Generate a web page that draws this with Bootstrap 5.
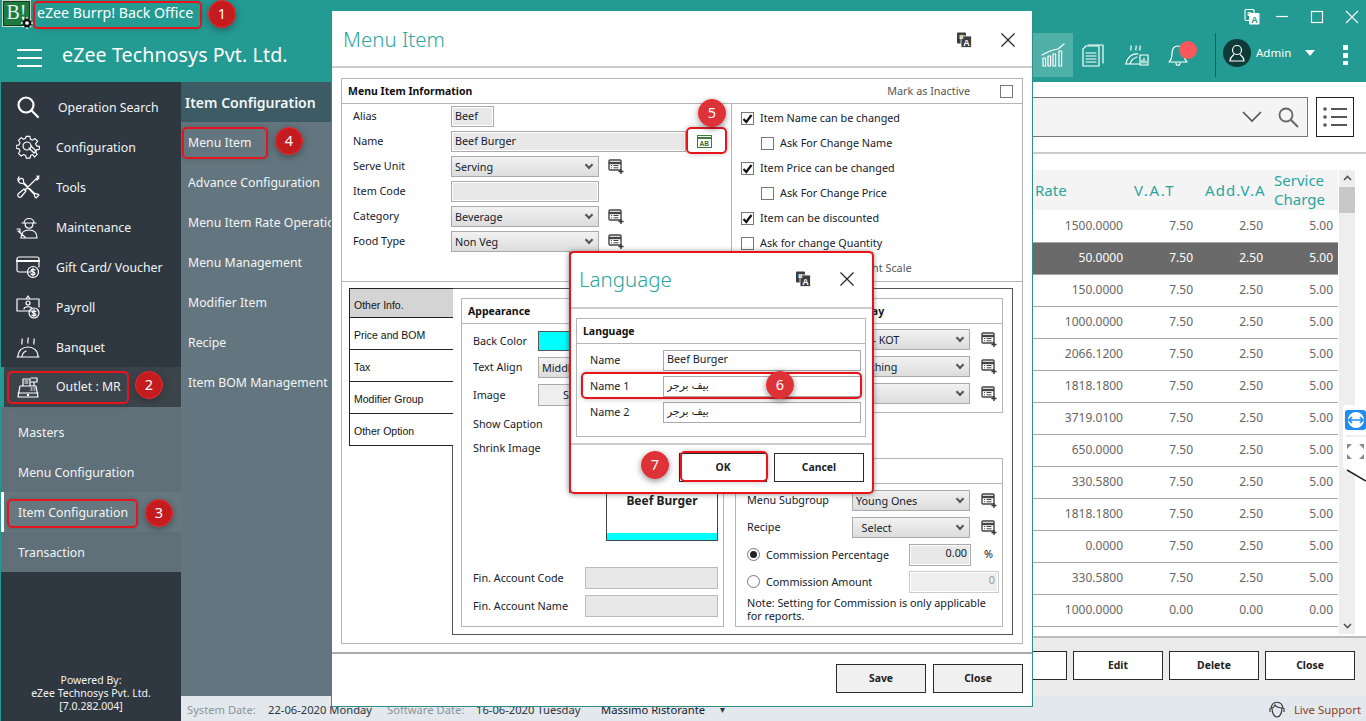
<!DOCTYPE html>
<html lang="en"><head><meta charset="utf-8"><title>eZee Burrp! Back Office</title>
<link href="https://cdn.jsdelivr.net/npm/bootstrap@5.3.0/dist/css/bootstrap.min.css" rel="stylesheet">
<style>
html,body{margin:0;width:1366px;height:721px;overflow:hidden;background:#fff}
body{font-family:"Noto Sans","DejaVu Sans",sans-serif;font-size:10.8px;color:#14202c;position:relative}
svg{display:block;flex:none}
.ic{fill:none;stroke:#fff;stroke-width:1.2;stroke-linecap:round;stroke-linejoin:round}
.shell{height:721px}
.topbar{background:#239a92;height:82px;color:#fff}
.titlerow{height:33px}
.logo{width:29px;height:27px;margin-left:2px;background:#1f7a42;border:1px solid #c8d8c8;box-shadow:inset 0 0 0 1px #0d3f22;color:#e8f3e6;font-family:"Liberation Serif",serif;font-size:20px;line-height:23px;text-align:center;position:relative}
.logogear{position:absolute;right:-3px;bottom:-3px}
.apptitle{font-size:14.2px;margin-left:6px;line-height:26px}
.winctl{margin-left:auto;padding-right:7px;gap:17px}
.trw-pos{margin-right:-6px}
.brandrow{height:49px}
.burger{width:25px;height:18px;margin-left:17px;border-top:2px solid #fff;border-bottom:2px solid #fff;position:relative}
.burger::after{content:"";position:absolute;left:0;right:0;top:6px;height:2px;background:#fff}
.brand{font-size:19.6px;margin-left:20px;letter-spacing:.1px;line-height:1;margin-top:-5px}
.hdr-icons{margin-left:auto;height:44px;align-self:flex-start}
.hi{width:40px;height:44px}
.hi-on{background:#4fb0a9}
.hi-2{margin-right:4px}.hi-3{margin-right:1px}
.bell-wrap{position:relative}
.dot{position:absolute;left:21px;top:8px;width:18px;height:18px;border-radius:50%;background:#f8575c}
.vsep{width:1px;height:44px;background:#155e59;margin-left:17px}
.avatar{width:28px;height:28px;border-radius:50%;background:#0e3b38;margin:-4px 0 0 7px}
.adminname{font-size:11.5px;margin:-4px 0 0 5px;width:49px}
.caretd{width:0;height:0;border-left:5px solid transparent;border-right:5px solid transparent;border-top:6px solid #fff;margin-top:-4px}
.kebab{margin:0 18px 0 28px;width:5px;height:20px;background:linear-gradient(#fff 5px,transparent 5px 8px,#fff 8px 13px,transparent 13px 16px,#fff 16px)}
.bodyrow{height:639px}
.sidebar{width:181px;background:#2f3740;border-left:1px solid #239a92;color:#f2f5f6;font-size:12.3px;flex-shrink:0}
.sb-main{padding-top:5px}
.sb-item{height:40px;padding-left:15px;gap:16px}
.sb-item span{padding-top:2px}
.sb-search{margin-right:2px}
.sb-outlet{height:40px;background:#3b434b;border-left:3px solid #239a92;padding-left:12px;gap:16px}
.sb-sub{background:#5f7079;padding-top:5px}
.sb-subitem{height:40px;padding:2px 0 0 17px}
.sb-active{background:#66777f;border-left:3px solid #fff;padding-left:14px}
.powered{margin-top:auto;text-align:center;font-size:10.5px;line-height:13px;padding-bottom:8px}
.subnav{width:151px;background:#63757e;color:#f2f5f6;font-size:12.3px;height:614px;overflow:hidden;white-space:nowrap;flex-shrink:0}
.subhead{height:40px;background:#3d5b65;font-size:14px;font-weight:600;padding:0 0 0 4px;margin-bottom:1px}
.subitem{height:40px;padding-left:7px}
.statusbar{background:#e3e8ec;height:25px;font-size:11.2px;padding:3px 5px 0 6px;white-space:nowrap;color:#2c3540}
.st-dim{color:#8b949c}
.st-a{width:81px}.st-b{width:119px}.st-c{width:89px}.st-d{width:125px}
.st-e{width:119px;color:#14202c}
.live{margin-left:auto;color:#8c3c1e;font-size:11.4px;gap:8px}
.mainarea{width:1034px}
.toolbar{height:72px;padding:15px 12px 0 0;border-bottom:2px solid #ccc;gap:8px;flex:none}
.finder{flex:1;height:40px;background:#f4f4f4;border:1px solid #777;justify-content:flex-end;gap:15px;padding-right:8px}
.listbtn{width:38px;height:40px;border:1px solid #222;background:#fff}
.tablezone{padding-top:16px;height:484px;border-bottom:2px solid #bbb;flex:none;overflow:hidden}
.grid-wrap{flex:1;height:464px;overflow:hidden}
.datagrid{width:1006px;table-layout:fixed;border-collapse:collapse;margin:0}
.datagrid th{height:40px;background:#f4f4f4;color:#2aa5a0;font-weight:400;font-size:15px;line-height:19px;padding:0 0 0 2px;border:0;vertical-align:middle}
.datagrid td{height:32px;padding:0 5px 0 0;text-align:right;color:#666;font-size:12px;border:0;border-bottom:1px solid #a8a8a8;vertical-align:middle;background:#fff}
.datagrid tr.sel td{background:#6a6a6a;color:#fff}
.c-name{width:701px}.c-rate{width:95px}.c-num{width:70px}
.datagrid .th-v{padding-left:6px;letter-spacing:1.6px}
.datagrid .th-a{padding-left:7px;white-space:nowrap;letter-spacing:1.1px}
.datagrid .th-s{padding-left:6px}
.vbar{width:16px;height:464px;background:#eee;margin:0 11px 0 1px;position:relative;flex:none}
.vthumb{height:26px;background:#c8c8c8;margin-top:17px}
.arrow-up,.arrow-dn{position:absolute;left:4px}
.arrow-up{top:5px}.arrow-dn{bottom:5px}
.actionbar{background:#ebebeb;height:58px;padding:13px 11px 0 0;gap:6px;flex:none}
.pbtn{width:90px;height:29px;border:1px solid #2a2a2a;border-radius:0;background:#fff;color:#222;font-weight:700;font-size:10.4px;padding:0;line-height:1;--bs-btn-hover-bg:#fff}
.pbtn-g{background:#f0f0f0}
.pbtn-ok{width:88px}
.win{position:absolute;background:#fff;display:flex;flex-direction:column}
.win-main{left:331px;top:11px;width:702px;height:696px;border:1px solid #2f8f88;border-top:0}
.win-head{height:57px;padding:2px 16px 0 11px;border-bottom:2px solid #ccc;flex:none}
.win-title{font-size:20.5px;color:#2aa5a0;font-weight:300;line-height:1;margin:0}
.win-tools{margin-left:auto;gap:28px}
.win-x{width:16px;height:16px}
.infobox{margin:10px 9px 0 9px;border:1px solid #b5b5b5;flex:1;min-height:0}
.infohead{height:25px;padding:0 9px 0 6px;border-bottom:1px solid #b5b5b5;flex:none}
.infohead b{font-weight:700;font-size:10.5px;color:#111;padding-top:2px}
.chk{width:13px;height:13px;border:1px solid #777;background:#fff;flex:none;display:flex;align-items:center;justify-content:center}
.chk-far{margin-left:30px}
.topsplit{height:178px;border-bottom:1px solid #b5b5b5;flex:none}
.lp{width:390px;border-right:1px solid #b5b5b5;flex:none}
.frow{height:25px;padding-left:11px}
.flabel{width:98px;flex:none}
.tbox{background:#e8e8e8;border:1px solid #aaa;box-shadow:inset 0 0 0 1px #fff;height:21px;padding:0 3px 2px;line-height:16px;font-size:10.8px;color:#14202c;border-radius:0;min-height:0}
.tbox:focus{background:#e8e8e8;border-color:#aaa;box-shadow:inset 0 0 0 1px #fff}
.w-alias{width:43px}.w-name{width:235px}.w-sel{width:148px}
.ab-ic{margin-left:11px}
.dd{height:21px;min-height:0;border:1px solid #aaa;border-radius:0;padding:0 18px 0 3px;font-size:10.8px;line-height:19px;color:#14202c;background:linear-gradient(#f2f2f2,#dcdcdc);background-color:#e8e8e8;position:relative;width:148px;flex:none;white-space:nowrap;overflow:hidden;display:flex;align-items:center}
.dd::after{content:"";position:absolute;right:6px;top:5px;width:6px;height:6px;border:solid #555;border-width:0 2px 2px 0;transform:rotate(45deg)}
.addic{margin-left:9px}
.addic-r{margin-left:11px}
.rp{padding:2px 0 0 9px;flex:1}
.crow{height:25px;gap:6px}
.crow-sub{padding-left:20px}
.dim{color:#555}
.lowsplit{flex:1;padding:6px 9px 8px 7px;min-height:0}
.tabsc{width:104px;flex:none;z-index:1;margin-right:-1px}
.vtab{height:32px;border:1px solid #222;border-top:0;padding:5px 0 0 4px;background:#fff;font-family:"Liberation Sans",sans-serif;font-size:10.5px;color:#111;display:flex;align-items:center;border-right:0}
.vtab:first-child{height:30px;border-top:1px solid #222;background:#d4d4d4}
.tabpane{flex:1;border:1px solid #555;padding:9px 9px 7px 8px;gap:11px;min-width:0}
.panel{border:1px solid #b5b5b5}
.panel-l{width:263px;flex:none;height:100%}
.panelhead{height:25px;padding:2px 0 0 6px;border-bottom:1px solid #b5b5b5;font-weight:700;font-size:10.5px;color:#111;flex:none}
.ph-disp{padding-left:110px}
.prow{padding-left:11px;display:flex;align-items:center}
.pr-1{margin-top:7px;height:20px}
.pr-2{margin-top:6px;height:21px}
.pr-3{margin-top:6px;height:22px}
.pr-4{margin-top:8px;height:20px}
.pr-5{margin-top:4px;height:20px}
.pr-6{margin-top:26px;height:22px}
.pr-7{margin-top:6px;height:22px}
.lab-a{width:65px;flex:none}
.swatch{width:60px;height:20px;background:#0ff;border:1px solid #555;flex:none}
.gbtn{height:22px;width:80px;background:#eee;border:1px solid #aaa;text-align:center;line-height:20px;flex:none}
.preview{width:112px;height:65px;border:1px solid #444;margin:18px 0 0 144px;text-align:center;font-weight:700;font-size:12px;color:#222;padding-top:15px;position:relative;background:#fff;flex:none}
.preview::after{content:"";position:absolute;left:0;right:0;bottom:0;height:7px;background:#0ff}
.tbox2{width:133px;height:22px;background:#e8e8e8;border:1px solid #bbb;flex:none}
.lab-f{width:112px;flex:none}
.panel-r{flex:1;min-width:0;display:flex;flex-direction:column}
.rp1{height:115px;flex:none}
.rp2{flex:1;margin-top:45px}
.rrow{height:27px;padding-left:11px;display:flex;align-items:center}
.rr-first1{margin-top:2px}
.rr-first2{margin-top:3px}
.rlab{width:105px;flex:none}
.dd-r{width:118px}
.rad{width:13px;height:13px;border:1px solid #777;border-radius:50%;background:#fff;flex:none;display:flex;align-items:center;justify-content:center;margin-right:6px}
.rad i{width:7px;height:7px;border-radius:50%;background:#222}
.comm{width:143px;flex:none;padding-top:1px}
.numbox{width:62px;height:22px;text-align:right;flex:none;display:block}
.numbox-w{width:90px;color:#999;background:#eee;border-color:#ccc}
.pct{margin-left:13px}
.note{padding:1px 5px 0 11px;line-height:13px;white-space:nowrap}
.w-foot{height:54px;border-top:2px solid #aaa;margin-top:8px;justify-content:flex-end;padding:10px 9px 0 0;gap:7px;flex:none;align-items:flex-start}
.win-lang{left:569px;top:252px;width:304px;height:241px;border:1px solid #2f8f88;z-index:5;box-shadow:0 1px 6px rgba(0,0,0,.25)}
.lang-head{height:56px;padding:0 17px 2px 9px;border-bottom:2px solid #ccc;flex:none}
.langbox{margin:9px 6px 0 6px;border:1px solid #b5b5b5;height:119px;flex:none}
.lang-gap{margin-bottom:3px}
.lrow{height:26px;padding-left:13px}
.lrow label{width:73px;flex:none}
.lin{width:198px;height:21px;border:1px solid #aaa;border-radius:0;padding:0 3px 3px;font-size:10.8px;line-height:15px;color:#14202c;background:#fff;min-height:0}
.lfoot{height:49px;border-top:2px solid #ccc;margin-top:6px;justify-content:flex-end;padding:8px 8px 0 0;gap:7px;align-items:flex-start;flex:none}
.anno{position:absolute;border:2px solid #e8141c;border-radius:5px;z-index:8;box-shadow:0 0 5px rgba(60,60,60,.35);pointer-events:none}
.an-1{left:33px;top:1px;width:169px;height:28px}
.an-2{left:7px;top:371px;width:122px;height:33px}
.an-3{left:7px;top:499px;width:131px;height:29px}
.an-4{left:182px;top:127px;width:86px;height:32px}
.an-5{left:686px;top:127px;width:41px;height:27px}
.an-6{left:581px;top:372px;width:281px;height:27px}
.an-7{left:680px;top:451px;width:88px;height:31px}
.an-8{left:569px;top:251px;width:305px;height:243px}
.num{position:absolute;width:28px;height:28px;border-radius:50%;background:#c41b1f;border:1px solid #f02a2e;color:#fff;font-size:14.5px;display:flex;align-items:center;justify-content:center;z-index:9;box-shadow:0 2px 6px rgba(40,40,40,.5)}
.num-lt{background:#dd3237}
.nm-1{left:208px;top:0}.nm-2{left:135px;top:371px}.nm-3{left:145px;top:499px}.nm-4{left:275px;top:127px}
.nm-5{left:698px;top:99px}.nm-6{left:766px;top:371px}.nm-7{left:641px;top:451px}
.tvtab{position:absolute;left:1342px;top:404px;z-index:4}
</style></head>
<body>
<svg width="0" height="0" class="position-absolute">
<defs>
<symbol id="tr" viewBox="0 0 16 16"><rect x="1" y="0.5" width="9" height="11" rx="1" fill="#3d3d3d"/><rect x="5" y="4" width="10.5" height="11.5" rx="1.2" fill="#3d3d3d" stroke="#fff" stroke-width=".8"/><text x="3.2" y="7" font-size="6" font-weight="700" fill="#fff" font-family="Liberation Sans">B</text><text x="7.2" y="13.6" font-size="9" font-weight="700" fill="#fff" font-family="Liberation Sans">A</text></symbol>
<symbol id="trw" viewBox="0 0 16 16"><rect x="1" y="0.5" width="9" height="11" rx="1" fill="none" stroke="#fff" stroke-width="1.1"/><rect x="5" y="4" width="10.5" height="11.5" rx="1.2" fill="#fff"/><text x="3.2" y="7" font-size="6" font-weight="700" fill="#fff" font-family="Liberation Sans">B</text><text x="7.2" y="13.6" font-size="9" font-weight="700" fill="#239a92" font-family="Liberation Sans">A</text></symbol>
<symbol id="add" viewBox="0 0 16 16"><rect x="1" y="1" width="12" height="10" rx="1" fill="none" stroke="#444" stroke-width="1.4"/><path d="M1 4h12" stroke="#444" stroke-width="2.4"/><path d="M3 6.5h1M5.5 6.5h5M3 8.8h1M5.5 8.8h5" stroke="#444" stroke-width="1"/><path d="M13 10v5M10.5 12.5h5" stroke="#333" stroke-width="1.4"/></symbol>
<symbol id="xx" viewBox="0 0 16 16"><path d="M1.5 1.5l13 13M14.5 1.5l-13 13" stroke="#222" stroke-width="1.2" fill="none"/></symbol>
<symbol id="chk" viewBox="0 0 11 11"><path d="M1.5 6l2.8 3L9.5 2" fill="none" stroke="#111" stroke-width="2.2"/></symbol>
</defs>
</svg>
<div class="shell d-flex flex-column">
<header class="topbar">
 <div class="titlerow d-flex">
  <div class="logo">B!<svg class="logogear" width="12" height="12" viewBox="0 0 13 13"><circle cx="6.5" cy="6.5" r="5" fill="#111"/><circle cx="6.5" cy="6.5" r="2" fill="#fff"/><path d="M6.5 0v2M6.5 11v2M0 6.5h2M11 6.5h2M2 2l1.4 1.4M9.6 9.6L11 11M11 2L9.6 3.4M3.4 9.6L2 11" stroke="#fff" stroke-width="1.4"/></svg></div>
  <div class="apptitle">eZee Burrp! Back Office</div>
  <div class="winctl d-flex align-items-center">
   <svg class="trw-pos" width="16" height="16"><use href="#trw"/></svg>
   <svg width="14" height="14" viewBox="0 0 14 14" class="ms-1"><path d="M1 6.5h12" stroke="#fff" stroke-width="1.2"/></svg>
   <svg width="14" height="14" viewBox="0 0 14 14" class="ms-1"><rect x="1.5" y="1.5" width="11" height="11" fill="none" stroke="#fff" stroke-width="1.2"/></svg>
   <svg width="14" height="14" viewBox="0 0 14 14" class="ms-1"><path d="M1 1l12 12M13 1L1 13" stroke="#fff" stroke-width="1.1"/></svg>
  </div>
 </div>
 <div class="brandrow d-flex align-items-center">
  <div class="burger"></div>
  <div class="brand">eZee Technosys Pvt. Ltd.</div>
  <div class="hdr-icons d-flex align-items-center">
   <div class="hi hi-on d-flex align-items-center justify-content-center"><svg class="ic" width="24" height="24" viewBox="0 0 24 24"><path d="M1 12l6-3 5-2 5-1 6-5"/><rect x="2" y="15" width="2.6" height="8"/><rect x="7" y="13" width="2.6" height="10"/><rect x="12" y="11" width="2.6" height="12"/><rect x="18" y="8" width="2.6" height="15"/></svg></div>
   <div class="hi hi-2 d-flex align-items-center justify-content-center"><svg class="ic" width="22" height="24" viewBox="0 0 22 24"><path d="M6 2h15v18"/><path d="M1 6l3-3h13v20H1z"/><path d="M4 10h10M4 13h10M4 16h10M4 19h10"/></svg></div>
   <div class="hi hi-3 d-flex align-items-center justify-content-center"><svg class="ic" width="24" height="24" viewBox="0 0 24 24"><path d="M6 7c-1-2 1-2 0-4M11 7c-1-2 1-2 0-4M15 7c-1-2 1-2 0-4M1 21c1-7 7-11 12-10"/><path d="M5 21c1-4 4-6 7-7M1 21h13"/><rect x="15" y="12" width="8" height="10"/><path d="M17 20v-3M19 20v-5M21 20v-2"/></svg></div>
   <div class="hi bell-wrap d-flex align-items-center justify-content-center"><svg class="ic" width="20" height="24" viewBox="0 0 20 24"><path d="M10 3c-5 0-6 4-6 8 0 4-1 6-3 8h18c-2-2-3-4-3-8 0-4-1-8-6-8z"/><path d="M8 20c0 3 4 3 4 0"/></svg><span class="dot"></span></div>
   <div class="vsep"></div>
   <div class="avatar d-flex align-items-center justify-content-center"><svg class="ic" width="18" height="20" viewBox="0 0 18 20"><circle cx="9" cy="7" r="4.5"/><path d="M6 11c0 2-4 2-4 7h14c0-5-4-5-4-7"/></svg></div>
   <div class="adminname">Admin</div>
   <div class="caretd"></div>
   <div class="kebab"></div>
  </div>
 </div>
</header>
<div class="bodyrow d-flex">
 <aside class="sidebar d-flex flex-column">
  <div class="sb-main">
   <div class="sb-item d-flex align-items-center"><svg class="ic sb-search" width="24" height="24" viewBox="0 0 24 24"><g stroke-width="2.2"><circle cx="10" cy="10" r="7.500"/><path d="M16 16l6 6"/></g></svg><span>Operation Search</span></div>
   <div class="sb-item d-flex align-items-center"><svg class="ic" width="24" height="24" viewBox="0 0 24 24"><path d="M10 1h4l.6 3 2.200 1 2.600-1.600 2.800 2.800L20 8.800l1 2.200 3 .6v3l-3 .6-1 2.200 1.600 2.600-2.800 2.800L17 20.200l-2.200 1-.6 2.800h-4l-.6-2.800-2.200-1-2.600 1.600L2 19l1.600-2.600-1-2.200-3-.6v-3l3-.6 1-2.200L2 5.200 4.800 2.400l2.600 1.600 2.200-1z" transform="scale(.95) translate(.6 .4)"/><circle cx="11" cy="11" r="4"/><path d="M13 13l5 5 2-2-5-5"/></svg><span>Configuration</span></div>
   <div class="sb-item d-flex align-items-center"><svg class="ic" width="24" height="24" viewBox="0 0 24 24"><path d="M23 1L9 15M21 1l2 2-2 2M3 2c-2 2-1 5 1 6 2 1 3 0 4 1l10 10c1 1 0 3 2 4l3-3c-2-2-4-1-5-2L8 8c-1-1 0-3-1-4S4 3 3 5"/><path d="M8 14l2 2-5 6c-2 1-4-1-3-3z"/></svg><span>Tools</span></div>
   <div class="sb-item d-flex align-items-center"><svg class="ic" width="24" height="24" viewBox="0 0 24 24"><path d="M8 8c0-6 10-6 10 0M6 8h14M9 8c0 7 8 7 8 0M5 23c0-6 3-8 8-8s8 2 8 8zM2 16l7 6M1 14l3 0 0 3"/></svg><span>Maintenance</span></div>
   <div class="sb-item d-flex align-items-center"><svg class="ic" width="24" height="24" viewBox="0 0 24 24"><path d="M15 17H3c-1 0-2-1-2-2V4c0-1 1-2 2-2h18c1 0 2 1 2 2v8"/><path d="M1 6h22" stroke-width="2"/><circle cx="17" cy="17" r="5.500"/><path d="M19 15c-1-1-4-1-4 .6s4 1 4 2.800-3 1.600-4 .6M17 13v8"/></svg><span>Gift Card/ Voucher</span></div>
   <div class="sb-item d-flex align-items-center"><svg class="ic" width="24" height="24" viewBox="0 0 24 24"><path d="M16 16H1V4h22v8M10 4l2-3 2 3"/><circle cx="12" cy="8" r="2"/><path d="M8 14c0-3 8-3 8 0"/><circle cx="18" cy="18" r="5"/><path d="M20 16.500c-1-1-4-1-4 .6s4 .8 4 2.400-3 1.500-4 .5M18 14.500v7"/></svg><span>Payroll</span></div>
   <div class="sb-item d-flex align-items-center"><svg class="ic" width="24" height="24" viewBox="0 0 24 24"><path d="M6 9C5 7 7 6 6 4M12 8c-1-2 1-3 0-5M18 9c-1-2 1-3 0-5M2 22c0-7 5-10 10-10s10 3 10 10zM1 22h22M6 22c0-3 2-5 4-6"/></svg><span>Banquet</span></div>
  </div>
  <div class="sb-outlet d-flex align-items-center"><svg class="ic" width="24" height="24" viewBox="0 0 24 24"><path d="M2 22l2-11h16l2 11zM2 18h20M7 11V4h7v7M15 3h6v4h-6M18 7v4"/><path d="M9 6h3M9 8h3M15 13h1M18 13h1M15 15h1M18 15h1"/><circle cx="12" cy="20" r=".6"/></svg><span>Outlet : MR</span></div>
  <div class="sb-sub">
   <div class="sb-subitem d-flex align-items-center">Masters</div>
   <div class="sb-subitem d-flex align-items-center">Menu Configuration</div>
   <div class="sb-subitem sb-active d-flex align-items-center">Item Configuration</div>
   <div class="sb-subitem d-flex align-items-center">Transaction</div>
  </div>
  <div class="powered">Powered By:<br>eZee Technosys Pvt. Ltd.<br>[7.0.282.004]</div>
 </aside>
 <div class="d-flex flex-column flex-grow-1">
  <div class="d-flex">
   <nav class="subnav">
    <div class="subhead d-flex align-items-center">Item Configuration</div>
    <div class="subitem d-flex align-items-center">Menu Item</div>
    <div class="subitem d-flex align-items-center">Advance Configuration</div>
    <div class="subitem d-flex align-items-center">Menu Item Rate Operation</div>
    <div class="subitem d-flex align-items-center">Menu Management</div>
    <div class="subitem d-flex align-items-center">Modifier Item</div>
    <div class="subitem d-flex align-items-center">Recipe</div>
    <div class="subitem d-flex align-items-center">Item BOM Management</div>
   </nav>
   <main class="mainarea d-flex flex-column">
    <div class="toolbar d-flex">
     <div class="finder d-flex align-items-center">
      <svg width="20" height="12" viewBox="0 0 20 12"><path d="M1 1l9 9 9-9" fill="none" stroke="#555" stroke-width="1.600"/></svg>
      <svg width="22" height="22" viewBox="0 0 22 22"><circle cx="9" cy="9" r="6.500" fill="none" stroke="#666" stroke-width="1.800"/><path d="M14 14l7 7" stroke="#666" stroke-width="2"/></svg>
     </div>
     <div class="listbtn d-flex align-items-center justify-content-center"><svg width="26" height="22" viewBox="0 0 26 22"><circle cx="3" cy="3" r="1.800" fill="#555"/><circle cx="3" cy="11" r="1.800" fill="#555"/><circle cx="3" cy="19" r="1.800" fill="#555"/><path d="M9 3h16M9 11h16M9 19h16" stroke="#555" stroke-width="1.800"/></svg></div>
    </div>
    <div class="tablezone d-flex">
     <div class="grid-wrap">
      <table class="datagrid">
       <colgroup><col class="c-name"><col class="c-rate"><col class="c-num"><col class="c-num"><col class="c-num"></colgroup>
       <thead><tr><th></th><th>Rate</th><th class="th-v">V.A.T</th><th class="th-a">Add.V.A</th><th class="th-s">Service Charge</th></tr></thead>
       <tbody>
        <tr><td></td><td>1500.0000</td><td>7.50</td><td>2.50</td><td>5.00</td></tr>
        <tr class="sel"><td></td><td>50.0000</td><td>7.50</td><td>2.50</td><td>5.00</td></tr>
        <tr><td></td><td>150.0000</td><td>7.50</td><td>2.50</td><td>5.00</td></tr>
        <tr><td></td><td>1000.0000</td><td>7.50</td><td>2.50</td><td>5.00</td></tr>
        <tr><td></td><td>2066.1200</td><td>7.50</td><td>2.50</td><td>5.00</td></tr>
        <tr><td></td><td>1818.1800</td><td>7.50</td><td>2.50</td><td>5.00</td></tr>
        <tr><td></td><td>3719.0100</td><td>7.50</td><td>2.50</td><td>5.00</td></tr>
        <tr><td></td><td>650.0000</td><td>7.50</td><td>2.50</td><td>5.00</td></tr>
        <tr><td></td><td>330.5800</td><td>7.50</td><td>2.50</td><td>5.00</td></tr>
        <tr><td></td><td>1818.1800</td><td>7.50</td><td>2.50</td><td>5.00</td></tr>
        <tr><td></td><td>0.0000</td><td>7.50</td><td>2.50</td><td>5.00</td></tr>
        <tr><td></td><td>330.5800</td><td>7.50</td><td>2.50</td><td>5.00</td></tr>
        <tr><td></td><td>1000.0000</td><td>0.00</td><td>0.00</td><td>0.00</td></tr>
       </tbody>
      </table>
     </div>
     <div class="vbar">
      <svg class="arrow-up" width="9" height="6" viewBox="0 0 9 6"><path d="M1 5l3.500-3.500L8 5" fill="none" stroke="#555" stroke-width="1.600"/></svg>
      <div class="vthumb"></div>
      <svg class="arrow-dn" width="9" height="6" viewBox="0 0 9 6"><path d="M1 1l3.500 3.500L8 1" fill="none" stroke="#555" stroke-width="1.600"/></svg>
     </div>
    </div>
    <div class="actionbar d-flex justify-content-end">
     <button class="btn pbtn" type="button">Add</button><button class="btn pbtn" type="button">Edit</button><button class="btn pbtn" type="button">Delete</button><button class="btn pbtn" type="button">Close</button>
    </div>
   </main>
  </div>
  <footer class="statusbar d-flex align-items-center">
   <span class="st-dim st-a">System Date:</span><span class="st-b">22-06-2020 Monday</span><span class="st-dim st-c">Software Date:</span><span class="st-d">16-06-2020 Tuesday</span><span class="st-e">Massimo Ristorante</span><span class="small">▾</span>
   <span class="live d-flex align-items-center"><svg width="18" height="20" viewBox="0 0 18 20" fill="none" stroke="#333" stroke-width="1.100"><path d="M3 9c0-9 12-9 12 0"/><path d="M4 8c0 5 2 9 5 9s5-4 5-9c-2 0-6-1-7-3-1 2-2 3-3 3z"/><path d="M2 8v4M16 8v4"/></svg>Live Support</span>
  </footer>
 </div>
</div>
</div>

<section class="win win-main">
 <div class="win-head d-flex align-items-center">
  <h1 class="win-title">Menu Item</h1>
  <div class="win-tools d-flex align-items-center"><svg width="16" height="16"><use href="#tr"/></svg><svg class="win-x"><use href="#xx"/></svg></div>
 </div>
 <div class="infobox d-flex flex-column">
  <div class="infohead d-flex align-items-center"><b>Menu Item Information</b><span class="ms-auto dim">Mark as Inactive</span><span class="chk chk-far"></span></div>
  <div class="topsplit d-flex">
   <div class="lp">
    <div class="frow d-flex align-items-center"><span class="flabel">Alias</span><input class="form-control tbox w-alias" value="Beef"></div>
    <div class="frow d-flex align-items-center"><span class="flabel">Name</span><input class="form-control tbox w-name" value="Beef Burger"><svg class="ab-ic" width="15" height="13" viewBox="0 0 15 13"><rect x=".5" y=".5" width="14" height="12" fill="#fff" stroke="#3d7a3d"/><path d="M.5 3h14" stroke="#3d7a3d" stroke-width="2"/><text x="2.500" y="10.500" font-size="6.500" font-weight="700" fill="#2f6a2f" font-family="Liberation Sans">AB</text></svg></div>
    <div class="frow d-flex align-items-center"><span class="flabel">Serve Unit</span><div class="dd">Serving</div><svg class="addic" width="16" height="16"><use href="#add"/></svg></div>
    <div class="frow d-flex align-items-center"><span class="flabel">Item Code</span><div class="tbox w-sel"></div></div>
    <div class="frow d-flex align-items-center"><span class="flabel">Category</span><div class="dd">Beverage</div><svg class="addic" width="16" height="16"><use href="#add"/></svg></div>
    <div class="frow d-flex align-items-center"><span class="flabel">Food Type</span><div class="dd">Non Veg</div><svg class="addic" width="16" height="16"><use href="#add"/></svg></div>
   </div>
   <div class="rp">
    <div class="crow d-flex align-items-center"><span class="chk"><svg width="11" height="11"><use href="#chk"/></svg></span>Item Name can be changed</div>
    <div class="crow crow-sub d-flex align-items-center"><span class="chk"></span>Ask For Change Name</div>
    <div class="crow d-flex align-items-center"><span class="chk"><svg width="11" height="11"><use href="#chk"/></svg></span>Item Price can be changed</div>
    <div class="crow crow-sub d-flex align-items-center"><span class="chk"></span>Ask For Change Price</div>
    <div class="crow d-flex align-items-center"><span class="chk"><svg width="11" height="11"><use href="#chk"/></svg></span>Item can be discounted</div>
    <div class="crow d-flex align-items-center"><span class="chk"></span>Ask for change Quantity</div>
    <div class="crow d-flex align-items-center"><span class="chk"></span><span class="dim">Get Weight from Weight Scale</span></div>
   </div>
  </div>
  <div class="lowsplit d-flex">
   <div class="tabsc">
    <div class="vtab">Other Info.</div><div class="vtab">Price and BOM</div><div class="vtab">Tax</div><div class="vtab">Modifier Group</div><div class="vtab">Other Option</div>
   </div>
   <div class="tabpane d-flex">
    <div class="panel panel-l d-flex flex-column">
     <div class="panelhead d-flex align-items-center">Appearance</div>
     <div class="prow pr-1"><span class="lab-a">Back Color</span><span class="swatch"></span></div>
     <div class="prow pr-2"><span class="lab-a">Text Align</span><div class="dd">Middle Center</div></div>
     <div class="prow pr-3"><span class="lab-a">Image</span><div class="gbtn">Select</div></div>
     <div class="prow pr-4">Show Caption</div>
     <div class="prow pr-5">Shrink Image</div>
     <div class="preview">Beef Burger</div>
     <div class="prow pr-6"><span class="lab-f">Fin. Account Code</span><span class="tbox2"></span></div>
     <div class="prow pr-7"><span class="lab-f">Fin. Account Name</span><span class="tbox2"></span></div>
    </div>
    <div class="panel-r">
     <div class="panel rp1 d-flex flex-column">
      <div class="panelhead ph-disp d-flex align-items-center">Display</div>
      <div class="rrow rr-first1"><span class="rlab">Printer</span><div class="dd dd-r">BK - KOT</div><svg class="addic-r" width="16" height="16"><use href="#add"/></svg></div>
      <div class="rrow"><span class="rlab">Printer 2</span><div class="dd dd-r">Nothing</div><svg class="addic-r" width="16" height="16"><use href="#add"/></svg></div>
      <div class="rrow"><span class="rlab">Printer 3</span><div class="dd dd-r"></div><svg class="addic-r" width="16" height="16"><use href="#add"/></svg></div>
     </div>
     <div class="panel rp2 d-flex flex-column">
      <div class="panelhead d-flex align-items-center">Other</div>
      <div class="rrow rr-first2"><span class="rlab">Menu Subgroup</span><div class="dd dd-r">Young Ones</div><svg class="addic-r" width="16" height="16"><use href="#add"/></svg></div>
      <div class="rrow"><span class="rlab">Recipe</span><div class="dd dd-r">&nbsp;&nbsp;Select</div><svg class="addic-r" width="16" height="16"><use href="#add"/></svg></div>
      <div class="rrow"><span class="rad"><i></i></span><span class="comm">Commission Percentage</span><span class="tbox numbox">0.00</span><span class="pct">%</span></div>
      <div class="rrow"><span class="rad"></span><span class="comm">Commission Amount</span><span class="tbox numbox numbox-w">0</span></div>
      <div class="note">Note: Setting for Commission is only applicable<br>for reports.</div>
     </div>
    </div>
   </div>
  </div>
 </div>
 <div class="w-foot d-flex">
  <button class="btn pbtn pbtn-g" type="button">Save</button><button class="btn pbtn pbtn-g" type="button">Close</button>
 </div>
</section>

<section class="win win-lang">
 <div class="lang-head d-flex align-items-center">
  <h2 class="win-title">Language</h2>
  <div class="win-tools d-flex align-items-center"><svg width="16" height="16"><use href="#tr"/></svg><svg class="win-x"><use href="#xx"/></svg></div>
 </div>
 <div class="langbox">
  <div class="panelhead d-flex align-items-center lang-gap">Language</div>
  <div class="lrow d-flex align-items-center"><label>Name</label><input class="form-control lin" value="Beef Burger"></div>
  <div class="lrow d-flex align-items-center"><label>Name 1</label><input class="form-control lin" value="بيف برجر"></div>
  <div class="lrow d-flex align-items-center"><label>Name 2</label><input class="form-control lin" value="بيف برجر"></div>
 </div>
 <div class="lfoot d-flex">
  <button class="btn pbtn pbtn-ok" type="button">OK</button><button class="btn pbtn" type="button">Cancel</button>
 </div>
</section>

<svg class="tvtab" width="24" height="78" viewBox="0 0 24 78"><path d="M24 78L4 66Q1 64 1 60V4Q1 1 4 1H24z" fill="#fff"/><path d="M24 77L5 66" stroke="#222" stroke-width="1.500" fill="none"/><rect x="3" y="6" width="21" height="20" rx="3" fill="#1e8cf0"/><circle cx="14" cy="16" r="8" fill="#fff"/><path d="M8 16h12M10 13l-3 3 3 3M18 13l3 3-3 3" stroke="#1e8cf0" stroke-width="1.700" fill="none"/><path d="M4 32h20" stroke="#d8e0e8"/><path d="M5 40h5l-5 5zM22 40h-5l5 5zM5 55h5l-5-5zM22 55h-5l5-5z" fill="#8a8a8a"/></svg>

<i class="anno an-1"></i><i class="anno an-2"></i><i class="anno an-3"></i><i class="anno an-4"></i><i class="anno an-5"></i><i class="anno an-6"></i><i class="anno an-7"></i><i class="anno an-8"></i>
<span class="num nm-1">1</span>
<span class="num nm-2">2</span>
<span class="num nm-3">3</span>
<span class="num nm-4">4</span>
<span class="num num-lt nm-5">5</span>
<span class="num num-lt nm-6">6</span>
<span class="num num-lt nm-7">7</span>
</body></html>
